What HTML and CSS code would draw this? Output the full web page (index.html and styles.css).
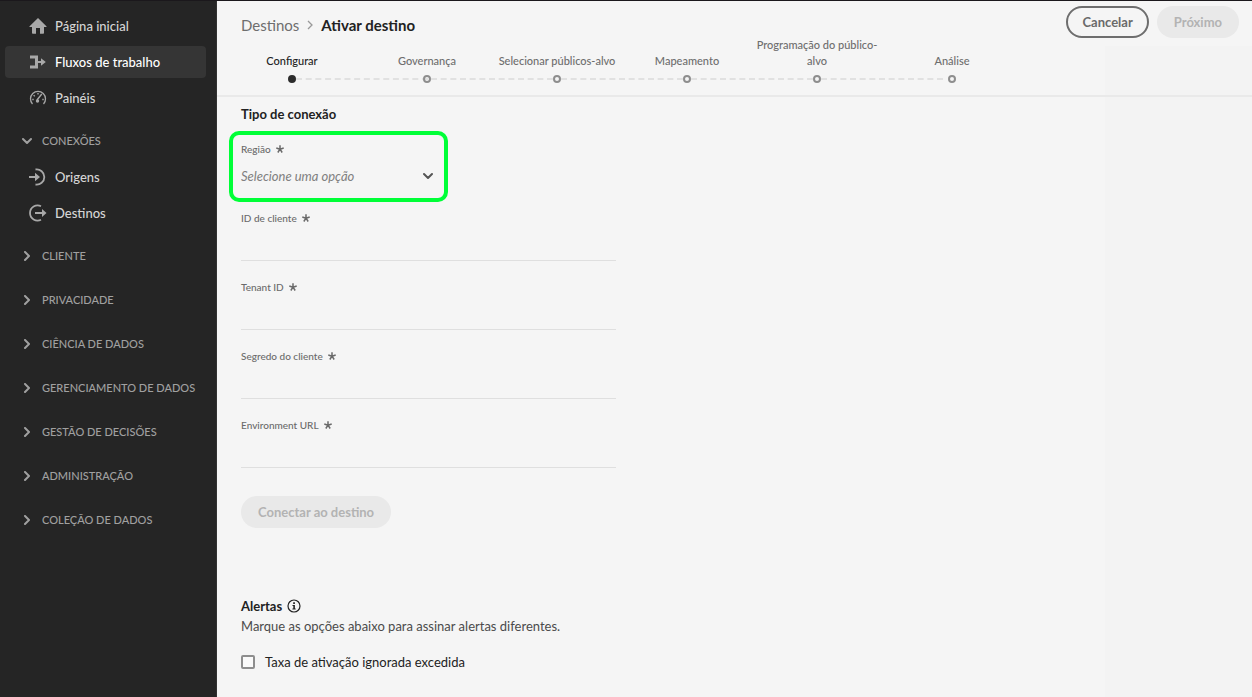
FILE: index.html
```html
<!DOCTYPE html>
<html lang="pt-BR">
<head>
<meta charset="utf-8">
<meta name="viewport" content="width=device-width, initial-scale=1">
<title>Ativar destino</title>
<link rel="stylesheet" href="styles.css">
</head>
<body>
<svg class="sprite" aria-hidden="true">
  <symbol id="chevron" viewBox="0 0 10 10"><path d="M3 1l4 4-4 4" fill="none" stroke="currentColor" stroke-width="2" stroke-linecap="round" stroke-linejoin="round"/></symbol>
  <symbol id="star" viewBox="0 0 8 8"><path d="M4 4.200V.2M4 4.200L.3 3M4 4.200l3.700-1.200M4 4.200L1.800 7.500M4 4.200l2.200 3.300" fill="none" stroke="currentColor" stroke-width="1.500"/></symbol>
</svg>
<div class="app">
  <nav class="sidebar" aria-label="Principal">
    <ul class="nav-list">
      <li><a class="nav-item" href="#"><svg class="nav-icon" viewBox="0 0 18 18"><path d="M9 1L.6 9.2c-.4.4-.2.8.3.8H3v6c0 .5.3.8.8.8H7V11h4v5.800h3.200c.5 0 .8-.3.8-.8v-6h2.100c.5 0 .7-.4.3-.8z" fill="currentColor"/></svg>Página inicial</a></li>
      <li><a class="nav-item active" href="#" aria-current="page"><svg class="nav-icon" viewBox="0 0 18 18"><path d="M1 2.500h8V8h3V5.200l4.800 3.800L12 12.800V10H9v5.500H1v-3h5v-7H1z" fill="currentColor"/></svg>Fluxos de trabalho</a></li>
      <li><a class="nav-item" href="#"><svg class="nav-icon" viewBox="0 0 18 18" fill="none" stroke="currentColor"><path d="M3.500 15A7.500 7.500 0 1 1 14.500 15" stroke-width="1.300"/><path d="M3.300 10.500h1.400M4.600 6.200l1.200 1M9 4v1.600M14.700 10.500h-1.400" stroke-width="1.400"/><path d="M12.800 5L8 11" stroke-width="1.400"/><circle cx="8.500" cy="12" r="1.700" fill="currentColor" stroke="none"/></svg>Painéis</a></li>
    </ul>
    <button class="section" type="button" aria-expanded="true"><svg class="chevron open"><use href="#chevron"/></svg>CONEXÕES</button>
    <ul class="nav-list">
      <li><a class="nav-item" href="#"><svg class="nav-icon" viewBox="0 0 18 18"><path d="M6.500 1.500a7.600 7.600 0 1 1 0 15" fill="none" stroke="currentColor" stroke-width="1.800"/><path d="M0 8h6V4.700L11 9l-5 4.300V10H0z" fill="currentColor"/></svg>Origens</a></li>
      <li><a class="nav-item" href="#"><svg class="nav-icon" viewBox="0 0 18 18"><path d="M12 2.200a7.600 7.600 0 1 0 0 13.600" fill="none" stroke="currentColor" stroke-width="1.800"/><path d="M6 8h7V5l4.500 4-4.500 4v-3H6z" fill="currentColor"/></svg>Destinos</a></li>
    </ul>
    <button class="section" type="button" aria-expanded="false"><svg class="chevron"><use href="#chevron"/></svg>CLIENTE</button>
    <button class="section" type="button" aria-expanded="false"><svg class="chevron"><use href="#chevron"/></svg>PRIVACIDADE</button>
    <button class="section" type="button" aria-expanded="false"><svg class="chevron"><use href="#chevron"/></svg>CIÊNCIA DE DADOS</button>
    <button class="section" type="button" aria-expanded="false"><svg class="chevron"><use href="#chevron"/></svg>GERENCIAMENTO DE DADOS</button>
    <button class="section" type="button" aria-expanded="false"><svg class="chevron"><use href="#chevron"/></svg>GESTÃO DE DECISÕES</button>
    <button class="section" type="button" aria-expanded="false"><svg class="chevron"><use href="#chevron"/></svg>ADMINISTRAÇÃO</button>
    <button class="section" type="button" aria-expanded="false"><svg class="chevron"><use href="#chevron"/></svg>COLEÇÃO DE DADOS</button>
  </nav>
  <main class="main">
    <header class="header">
      <div class="topbar">
        <div class="breadcrumb"><a href="#">Destinos</a><svg class="crumb-chevron" viewBox="0 0 6 10"><path d="M1 1l4 4-4 4" fill="none" stroke="currentColor" stroke-width="1.300"/></svg><h1>Ativar destino</h1></div>
        <div class="actions"><button class="btn outline" type="button">Cancelar</button><button class="btn" type="button" disabled>Próximo</button></div>
      </div>
      <ol class="stepper">
        <li class="step current" aria-current="step"><span>Configurar</span></li>
        <li class="step"><span>Governança</span></li>
        <li class="step"><span>Selecionar públicos-alvo</span></li>
        <li class="step"><span>Mapeamento</span></li>
        <li class="step"><span>Programação do público-alvo</span></li>
        <li class="step"><span>Análise</span></li>
      </ol>
    </header>
    <form class="content">
      <h2>Tipo de conexão</h2>
      <div class="field highlighted">
        <label for="region">Região <svg class="star"><use href="#star"/></svg></label>
        <div class="picker"><select id="region" required><option value="">Selecione uma opção</option></select><svg class="chevron open"><use href="#chevron"/></svg></div>
      </div>
      <div class="field"><label for="client">ID de cliente <svg class="star"><use href="#star"/></svg></label><input id="client" type="text" required></div>
      <div class="field"><label for="tenant">Tenant ID <svg class="star"><use href="#star"/></svg></label><input id="tenant" type="text" required></div>
      <div class="field"><label for="secret">Segredo do cliente <svg class="star"><use href="#star"/></svg></label><input id="secret" type="password" required></div>
      <div class="field"><label for="env">Environment URL <svg class="star"><use href="#star"/></svg></label><input id="env" type="text" required></div>
      <button class="btn connect" type="submit" disabled>Conectar ao destino</button>
      <section class="alerts">
        <h2>Alertas <svg class="info" viewBox="0 0 14 14"><circle cx="7" cy="7" r="6" fill="none" stroke="currentColor" stroke-width="1.200"/><path d="M6.200 3.300h1.700v1.600H6.200zM5.500 6h2.400v3.500h.8v1H5.400v-1h.9V7h-.8z" fill="currentColor"/></svg></h2>
        <p>Marque as opções abaixo para assinar alertas diferentes.</p>
        <label class="check"><input type="checkbox">Taxa de ativação ignorada excedida</label>
      </section>
    </form>
  </main>
</div>
</body>
</html>
```
FILE: styles.css
```css
*, *::before, *::after { box-sizing: border-box; }
body {
  margin: 0;
  font-family: Lato, "Noto Sans", sans-serif;
  font-size: 13px;
  line-height: 20px;
  color: #222;
}
button, input, select { font: inherit; color: inherit; }
h1, h2, p, ul, ol { margin: 0; padding: 0; }
ul, ol { list-style: none; }
a { color: inherit; text-decoration: none; }
.sprite { display: none; }

.app {
  display: grid;
  grid-template-columns: 217px 1fr;
  min-height: 100vh;
  border-top: 1px solid #1b181c;
}

.sidebar {
  padding: 9px 10px 9px 5px;
  background: #252525;
  border-right: 1px solid #323232;
  color: #a8a8a8;
}
.nav-list { display: grid; gap: 4px; padding-bottom: 3px; }
.nav-item {
  display: flex;
  align-items: center;
  gap: 8px;
  height: 32px;
  padding-left: 24px;
  border-radius: 4px;
  color: #d5d5d5;
  font-weight: 500;
}
.nav-item.active { background: #353535; color: #fff; }
.nav-icon { width: 18px; height: 18px; color: #a8a8a8; }
.section {
  display: flex;
  align-items: center;
  gap: 10px;
  width: 100%;
  height: 24px;
  margin: 12px 0 8px;
  padding: 0 0 0 17px;
  border: 0;
  background: none;
  color: #a0a0a0;
  font-size: 11px;
  font-weight: 500;
  text-align: left;
}
.section + .section { margin-top: 20px; }
.chevron { width: 10px; height: 10px; flex: none; }
.chevron.open { transform: rotate(90deg); }

.main {
  min-width: 0;
  background: linear-gradient(#f3f3f3, #f3f3f3) right bottom / 147px calc(100% - 45px) no-repeat #f5f5f5;
}
.header { border-bottom: 2px solid #e9e9e9; }
.topbar {
  display: flex;
  justify-content: space-between;
  padding: 5px 13px 0 24px;
}
.breadcrumb {
  display: flex;
  align-items: center;
  gap: 8px;
  height: 38px;
  margin-bottom: -8px;
  font-size: 15px;
  color: #6e6e6e;
}
h1 { font-size: 15px; font-weight: 700; color: #222; }
.crumb-chevron { width: 6px; height: 10px; color: #999; }
.actions { display: flex; gap: 8px; margin-bottom: -1px; }
.btn {
  height: 32px;
  padding: 0 17px;
  border: 0;
  border-radius: 16px;
  background: #e9e9e9;
  font-size: 13px;
  font-weight: 700;
}
.btn:disabled { color: #b3b3b3; }
.btn.outline { background: transparent; border: 2px solid #6e6e6e; padding: 0 14px; color: #6a6a6a; }

.stepper {
  display: flex;
  padding: 0 0 12px 5px;
  font-size: 11px;
  font-weight: 500;
  line-height: 16px;
  color: #6e6e6e;
}
.step {
  position: relative;
  display: flex;
  flex-direction: column;
  align-items: center;
  justify-content: flex-end;
  gap: 6px;
  width: 130px;
  text-align: center;
}
.step:first-child, .step:last-child { width: 140px; }
.step::after {
  content: "";
  width: 8px;
  height: 8px;
  border: 2px solid #8e8e8e;
  border-radius: 50%;
}
.step:not(:last-child)::before {
  content: "";
  position: absolute;
  left: calc(50% + 4px);
  bottom: 3px;
  width: calc(100% - 8px);
  border-top: 2px dashed #e1e1e1;
}
.step.current { color: #222; }
.step.current::after { background: #2c2c2c; border-color: #2c2c2c; }

.content { padding: 7px 24px 16px; }
h2 { display: flex; align-items: center; gap: 5px; font-size: 13px; font-weight: 700; }
.field { display: flex; flex-direction: column; max-width: 375px; margin-bottom: 18px; }
.field label {
  display: flex;
  align-items: center;
  gap: 5px;
  height: 16px;
  font-size: 10px;
  font-weight: 500;
  color: #6a6a6a;
}
.star { width: 8px; height: 8px; }
.field input {
  height: 35px;
  padding: 0;
  border: 0;
  border-bottom: 1px solid #dfdfdf;
  border-radius: 0;
  background: none;
}
.field.highlighted {
  max-width: 219px;
  margin: 7px 0 8px -12px;
  padding: 6px 10px 6px 8px;
  border: 4px solid #00ff37;
  border-radius: 10px;
}
.picker { position: relative; height: 35px; color: #555; }
.picker select {
  width: 100%;
  height: 35px;
  padding: 2px 20px 0 0;
  border: 0;
  appearance: none;
  background: none;
  font-style: italic;
  color: #808080;
}
.picker .chevron { position: absolute; right: 1px; top: 14px; pointer-events: none; }
.connect { display: block; margin-top: 28px; }
.alerts { margin-top: 68px; }
.info { width: 14px; height: 14px; }
.alerts p { color: #4b4b4b; }
.check { display: flex; align-items: center; gap: 10px; width: fit-content; margin-top: 16px; }
.check input {
  appearance: none;
  width: 14px;
  height: 14px;
  margin: 0;
  border: 2px solid #8e8e8e;
  border-radius: 2px;
  background: #fafafa;
}
```
